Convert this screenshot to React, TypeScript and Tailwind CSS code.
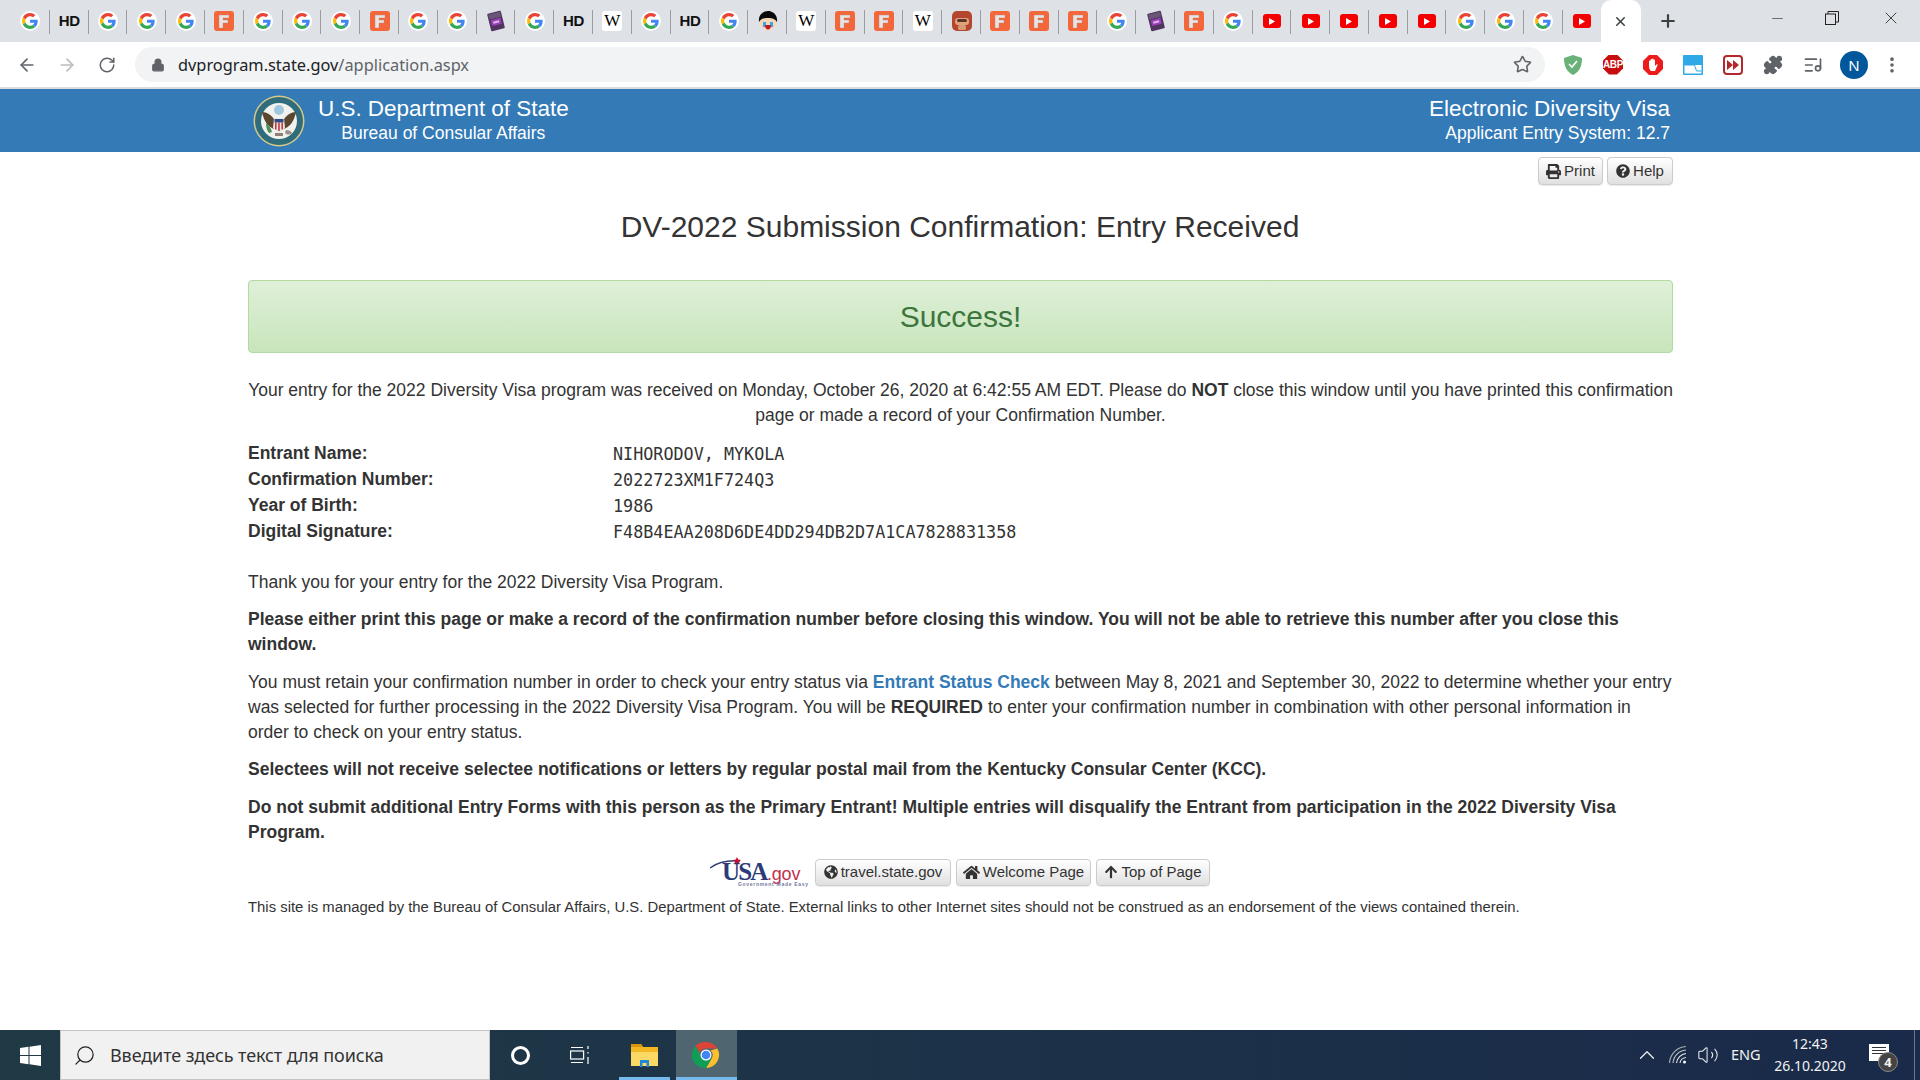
import React from 'react';
import { ArrowLeft, ArrowRight, RotateCw, Lock, Star, Puzzle, Plus, X, Minus, MoreVertical, ListMusic, Search, ChevronUp, Volume2 } from 'lucide-react';
import { FaPrint, FaQuestionCircle, FaGlobeAmericas, FaHome, FaArrowUp } from 'react-icons/fa';

const sans = { fontFamily: '"Liberation Sans", Arial, sans-serif' };

function G() {
  return (
    <div className="w-5 h-5 rounded-full bg-white flex items-center justify-center">
      <svg width="16" height="16" viewBox="0 0 48 48">
        <path fill="#EA4335" d="M24 9.5c3.5 0 6.7 1.2 9.2 3.6l6.9-6.9C35.9 2.4 30.5 0 24 0 14.6 0 6.5 5.4 2.6 13.2l8 6.2C12.5 13.7 17.800 9.5 24 9.5z" />
        <path fill="#4285F4" d="M47 24.500c0-1.600-.1-3.100-.4-4.500H24v9h12.900c-.6 3-2.200 5.500-4.700 7.200l7.700 6C44.400 38 47 31.800 47 24.500z" />
        <path fill="#FBBC05" d="M10.500 28.600c-.5-1.400-.8-3-.8-4.600s.3-3.200.8-4.600l-8-6.200C.9 16.500 0 20.100 0 24s.9 7.500 2.600 10.800l7.900-6.200z" />
        <path fill="#34A853" d="M24 48c6.500 0 11.900-2.100 15.900-5.800l-7.700-6c-2.200 1.400-4.900 2.300-8.200 2.300-6.200 0-11.500-4.200-13.400-9.900l-8 6.200C6.500 42.600 14.600 48 24 48z" />
      </svg>
    </div>
  );
}
function F() {
  return (
    <div className="w-5 h-5 rounded-[3px] bg-[#f4673a] flex items-center justify-center">
      <svg width="12" height="14" viewBox="0 0 12 14"><path d="M1 1h10v3H5v2h5v3H5v5H1z" fill="#e8e4e2" stroke="#a88" strokeWidth="0.4" /></svg>
    </div>
  );
}
function HD() {
  return <div className="text-[15px] font-bold text-[#111] leading-5 tracking-[-0.3px]" style={sans}>HD</div>;
}
function W() {
  return <div className="w-5 h-5 rounded-[3px] bg-white text-center text-[17px] leading-5 text-black" style={{ fontFamily: '"Liberation Serif", serif' }}>W</div>;
}
function P() {
  return (
    <svg width="20" height="22" viewBox="0 0 20 22">
      <g transform="rotate(-14 10 11)">
        <rect x="3" y="2" width="14" height="18" rx="1" fill="#50335f" />
        <rect x="4" y="3" width="12" height="5" fill="#6a5577" />
        <rect x="5" y="9" width="10" height="6" fill="#9a3fb8" />
        <rect x="7" y="11" width="6" height="2" fill="#d9b8e6" />
      </g>
    </svg>
  );
}
function Face() {
  return (
    <svg width="20" height="20" viewBox="0 0 20 20">
      <circle cx="10" cy="11" r="8.500" fill="#f5d7b8" />
      <path d="M1 11C0 3 6 0 10 0s10 3 9 11c-2-3-4-4-9-4s-7 1-9 4z" fill="#0a0a0a" />
      <path d="M5 11h3v5H5zM12 11h3v5h-3z" fill="#35a6e0" />
      <path d="M7 14h6c0 3-1.500 4.500-3 4.500S7 17 7 14z" fill="#c4162a" />
    </svg>
  );
}
function Monkey() {
  return (
    <svg width="20" height="20" viewBox="0 0 20 20">
      <rect width="20" height="20" rx="5" fill="#b4452f" />
      <rect x="3" y="7" width="14" height="7" rx="3" fill="#e3a37a" />
      <rect x="5" y="8" width="10" height="3" rx="1.500" fill="#5c3626" />
      <rect x="6" y="14" width="8" height="5" rx="1.500" fill="#d89a73" />
    </svg>
  );
}
function Y() {
  return (
    <div className="w-[18px] h-[14px] rounded-[3px] bg-[#f40000] flex items-center justify-center">
      <svg width="6" height="7" viewBox="0 0 6 7"><path d="M0 0l6 3.500L0 7z" fill="#fff" /></svg>
    </div>
  );
}

const tabs = 'G H G G G F G G G F G G P G H W G H G A W F F W M F F F G P F G Y Y Y Y Y G G G Y'.split(' ');
const tabIcon: Record<string, React.ReactNode> = { G: <G />, H: <HD />, F: <F />, W: <W />, P: <P />, A: <Face />, M: <Monkey />, Y: <Y /> };

function TabBar() {
  return (
    <div className="h-[42px] bg-[#dee1e6] flex items-start pl-[11px] relative">
      {tabs.map((t, i) => (
        <div key={i} className="w-[38.8px] h-[42px] flex items-center justify-center relative shrink-0">
          {tabIcon[t]}
          {i < tabs.length - 1 && <div className="absolute right-0 top-[10px] h-[24px] w-px bg-[#9a9da1]" />}
        </div>
      ))}
      <div className="w-[40px] h-[42px] bg-white rounded-t-[10px] flex items-center justify-center shrink-0 -ml-[1px]">
        <X size={15} strokeWidth={2.4} className="text-[#3c4043]" />
      </div>
      <div className="ml-[17px] h-[42px] flex items-center"><Plus size={20} strokeWidth={2.6} className="text-[#3c4043]" /></div>
      <div className="ml-auto flex h-[36px] items-center pr-[19px] text-[#3c4043]">
        <Minus size={17} strokeWidth={1} className="mr-[39px]" />
        <svg width="14" height="14" viewBox="0 0 14 14" fill="none" stroke="#222" className="mr-[42px]"><rect x="0.500" y="3" width="10" height="10.500" /><path d="M3 3V.500h10.500V11H10.500" /></svg>
        <X size={20} strokeWidth={1} className="text-[#222]" />
      </div>
    </div>
  );
}

function Toolbar() {
  return (
    <div className="h-[47px] bg-white border-b-2 border-[#dddddd] flex items-start">
      <div className="w-[135px] h-[45px] flex items-center pl-[17px] gap-[20px]">
        <ArrowLeft size={20} className="text-[#5f6368]" />
        <ArrowRight size={20} className="text-[#babcbe]" />
        <RotateCw size={18} className="text-[#5f6368] ml-[1px]" />
      </div>
      <div className="w-[1410px] h-[35px] mt-[5px] rounded-full bg-[#f1f3f4] flex items-center pl-[16px] pr-[13px]">
        <Lock size={14} fill="#5f6368" strokeWidth={2} className="text-[#5f6368]" />
        <div className="ml-[13px] text-[16.350px] leading-none text-[#5f6368] pt-[1px]" style={{ fontFamily: '"Noto Sans", sans-serif' }}>
          <span className="text-[#202124]">dvprogram.state.gov</span>/application.aspx
        </div>
        <Star size={19} className="ml-auto text-[#5f6368]" />
      </div>
      <div className="flex items-center h-[45px] ml-[18px] gap-[20px]">
        <svg width="20" height="22" viewBox="0 0 20 22"><path d="M10 1l9 3c0 9-3 14-9 17C4 18 1 13 1 4z" fill="#68b279" /><path d="M6 10l3 3 5-6" stroke="#fff" strokeWidth="1.600" fill="none" /></svg>
        <div className="w-[20px] h-[20px] bg-[#c70d0d] text-white text-[10px] font-bold text-center leading-5 tracking-[-0.4px] [clip-path:polygon(30%_0,70%_0,100%_30%,100%_70%,70%_100%,30%_100%,0_70%,0_30%)]" style={sans}>ABP</div>
        <svg width="20" height="20" viewBox="0 0 20 20"><path d="M6 0h8l6 6v8l-6 6H6l-6-6V6z" fill="#ec1c1c" /><path d="M6 10V6a.8.8 0 0 1 1.500 0v3V4.500a.8.8 0 0 1 1.500 0V9V4a.8.8 0 0 1 1.500 0v5V5a.8.8 0 0 1 1.500 0v6l1.500-1.500c.7-.5 1.400.1 1 .8L12 16H8c-1.500-1-2-3-2-6z" fill="#fff" /></svg>
        <svg width="20" height="20" viewBox="0 0 20 20"><rect width="20" height="20" rx="1" fill="#2fa8e8" /><rect x="1.500" y="10" width="17" height="8.500" fill="#fff" /><path d="M1.500 10h10l2 6h5" fill="none" stroke="#2fa8e8" strokeWidth="1" /></svg>
        <svg width="20" height="20" viewBox="0 0 20 20"><rect x="1" y="1" width="18" height="18" rx="3" fill="#fff" stroke="#b3282d" strokeWidth="2" /><path d="M4 5l6 5-6 5zM10 5l6 5-6 5z" fill="#b3282d" /></svg>
        <Puzzle size={20} fill="#5f6368" className="text-[#5f6368]" />
        <ListMusic size={20} className="text-[#5f6368]" />
        <div className="w-7 h-7 rounded-full bg-[#01579b] text-white text-[15px] text-center leading-7 -ml-[3px] -mr-[6px]" style={{ fontFamily: '"Noto Sans", sans-serif' }}>N</div>
        <MoreVertical size={20} strokeWidth={2.4} className="text-[#5f6368]" />
      </div>
    </div>
  );
}

function Seal() {
  return (
    <svg width="52" height="52" viewBox="0 0 52 52">
      <circle cx="26" cy="26" r="25.500" fill="#d7c98a" />
      <circle cx="26" cy="26" r="24" fill="#2f6d7d" />
      <circle cx="26" cy="26" r="18" fill="#f1f2ee" />
      <circle cx="26" cy="15" r="5" fill="#9fc8de" />
      <path d="M9 17c5 0 9 3 12 7l1 10c-6-1-11-7-13-17zM43 17c-5 0-9 3-12 7l-1 10c6-1 11-7 13-17z" fill="#5b4630" />
      <path d="M21 23h10l1 10-6 5-6-5z" fill="#e8e8e8" />
      <path d="M21.500 24h9v3.500h-9z" fill="#2b4a86" />
      <path d="M22 27.500h1.600v7H22zM25.200 27.500h1.600v8.500h-1.600zM28.400 27.500H30v7h-1.600z" fill="#c43a3a" />
      <path d="M13 28c3 2 5 5 6 9l-3 1c-2-2-3-6-3-10z" fill="#4e8f57" />
      <path d="M33 35c3 0 5 1 6 3-2 2-5 2-7 0z" fill="#9a9088" />
      <path d="M22 38h8v3h-8z" fill="#8d8078" />
    </svg>
  );
}

function Header() {
  return (
    <div className="h-[63px] bg-[#337ab7] text-white">
      <div className="w-[1425px] ml-[248px] h-full flex items-center justify-between pl-[5px] pr-[3px]" style={sans}>
        <div className="flex items-center">
          <Seal />
          <div className="ml-[13px] text-center">
            <div className="text-[22.500px] leading-[26px] tracking-[-0.03px]">U.S. Department of State</div>
            <div className="text-[17.500px] leading-[22px] mb-[1px]">Bureau of Consular Affairs</div>
          </div>
        </div>
        <div className="text-right">
          <div className="text-[22.500px] leading-[26px]">Electronic Diversity Visa</div>
          <div className="text-[17.500px] leading-[22px] mb-[1px]">Applicant Entry System: 12.7</div>
        </div>
      </div>
    </div>
  );
}

function Btn({ icon, children, className = '' }: { icon: React.ReactNode; children: React.ReactNode; className?: string }) {
  return (
    <div className={`h-[27px] flex items-center justify-center gap-[3px] rounded-[4px] border border-[#cccccc] bg-gradient-to-b from-white to-[#e0e0e0] text-[15px] leading-none text-[#333] shadow-[0_1px_1px_rgba(0,0,0,0.08)] ${className}`}>
      {icon}
      <span className="-mt-[1px]">{children}</span>
    </div>
  );
}

function Row({ label, value }: { label: string; value: string }) {
  return (
    <div className="flex h-[26px]">
      <div className="w-[365px] font-bold text-[17.500px] leading-[24px]">{label}</div>
      <div className="text-[16.750px] leading-[27px] text-[#333]" style={{ fontFamily: '"DejaVu Sans Mono", monospace' }}>{value}</div>
    </div>
  );
}

function UsaLogo() {
  return (
    <div className="relative w-[100px] h-[30px] shrink-0">
      <svg className="absolute left-0 top-0" width="36" height="14" viewBox="0 0 36 14">
        <path d="M0 11C8 5 18 3 30 4" fill="none" stroke="#2d3a78" strokeWidth="1.300" />
        <path d="M27 0l1.200 2.600 2.800.3-2 1.900.6 2.800-2.600-1.400-2.500 1.400.5-2.800-2-1.900 2.800-.3z" fill="#c8102e" />
      </svg>
      <div className="absolute left-[12px] top-[1px] text-[25px] leading-[28px] tracking-[-1.800px] font-bold text-[#2d3a78]" style={{ fontFamily: '"Liberation Serif", serif' }}>USA</div>
      <div className="absolute left-[57px] top-[7px] text-[18px] leading-[20px] tracking-[-0.2px] text-[#c4304c]" style={sans}>.gov</div>
      <div className="absolute left-[28px] top-[24px] text-[5px] leading-[6px] tracking-[0.7px] whitespace-nowrap text-[#75789f] font-bold" style={sans}>Government Made Easy</div>
    </div>
  );
}

function Main() {
  return (
    <div className="w-[1425px] ml-[248px] text-[#333] text-[17.500px] leading-[25px]" style={sans}>
      <div className="flex justify-end gap-[4px] pt-[5px]">
        <Btn icon={<FaPrint size={15} />} className="w-[65px] h-[28px]">Print</Btn>
        <Btn icon={<FaQuestionCircle size={14} />} className="w-[66px] h-[28px]">Help</Btn>
      </div>
      <h1 className="text-[30px] leading-[34px] text-center mt-[25px] -ml-[1px]">DV-2022 Submission Confirmation: Entry Received</h1>
      <div className="mt-[36px] h-[73px] rounded-[4px] border border-[#b2dba1] bg-gradient-to-b from-[#dff0d8] to-[#c8e5bc] text-[#3c763d] text-[30px] flex items-center justify-center">Success!</div>
      <p className="mt-[25px] text-center -mx-[6px]">
        Your entry for the 2022 Diversity Visa program was received on Monday, October 26, 2020 at 6:42:55 AM EDT. Please do <b>NOT</b> close this window until you have printed this confirmation page or made a record of your Confirmation Number.
      </p>
      <div className="mt-[13px]">
        <Row label="Entrant Name:" value="NIHORODOV, MYKOLA" />
        <Row label="Confirmation Number:" value="2022723XM1F724Q3" />
        <Row label="Year of Birth:" value="1986" />
        <Row label="Digital Signature:" value="F48B4EAA208D6DE4DD294DB2D7A1CA7828831358" />
      </div>
      <p className="mt-[25px]">Thank you for your entry for the 2022 Diversity Visa Program.</p>
      <p className="mt-[12px] font-bold">Please either print this page or make a record of the confirmation number before closing this window. You will not be able to retrieve this number after you close this window.</p>
      <p className="mt-[13px]">
        You must retain your confirmation number in order to check your entry status via <b className="text-[#337ab7]">Entrant Status Check</b> between May 8, 2021 and September 30, 2022 to determine whether your entry was selected for further processing in the 2022 Diversity Visa Program. You will be <b>REQUIRED</b> to enter your confirmation number in combination with other personal information in order to check on your entry status.
      </p>
      <p className="mt-[12px] font-bold">Selectees will not receive selectee notifications or letters by regular postal mail from the Kentucky Consular Center (KCC).</p>
      <p className="mt-[13px] font-bold">Do not submit additional Entry Forms with this person as the Primary Entrant! Multiple entries will disqualify the Entrant from participation in the 2022 Diversity Visa Program.</p>
      <div className="mt-[12px] w-[1424px] flex justify-center items-center gap-[5px]">
        <UsaLogo />
        <Btn icon={<FaGlobeAmericas size={14} />} className="w-[136px]">travel.state.gov</Btn>
        <Btn icon={<FaHome size={17} />} className="w-[135px]">Welcome Page</Btn>
        <Btn icon={<FaArrowUp size={14} />} className="w-[114px]">Top of Page</Btn>
      </div>
      <p className="mt-[10px] text-[14.875px] leading-[20px]">This site is managed by the Bureau of Consular Affairs, U.S. Department of State. External links to other Internet sites should not be construed as an endorsement of the views contained therein.</p>
    </div>
  );
}

function Taskbar() {
  return (
    <div className="h-[50px] bg-gradient-to-r from-[#1f3a45] to-[#1a2a4a] flex items-stretch text-white">
      <div className="w-[60px] flex items-center justify-center">
        <svg width="21" height="21" viewBox="0 0 21 21" fill="#fff"><path d="M0 3l8.500-1.200V10H0zM9.500 1.700L21 0v10H9.500zM0 11h8.500v8.200L0 18zM9.500 11H21v10L9.500 19.300z" /></svg>
      </div>
      <div className="w-[430px] bg-[#f1f1f1] border border-[#c4c4c4] flex items-center pl-[12px] text-[#333] text-[18px]" style={{ fontFamily: '"Noto Sans", sans-serif' }}>
        <Search size={23} strokeWidth={1.300} className="text-[#222] -scale-x-100" />
        <span className="ml-[14px] tracking-[-0.1px]">Введите здесь текст для поиска</span>
      </div>
      <div className="w-[60px] flex items-center justify-center">
        <div className="w-[19px] h-[19px] rounded-full border-[3px] border-white" />
      </div>
      <div className="w-[60px] flex items-center justify-center">
        <svg width="20" height="20" viewBox="0 0 20 20" fill="none" stroke="#fff" strokeWidth="1.200"><rect x="0.600" y="6" width="13" height="8" /><path d="M1 2.500h12M1 17.500h12M18 1v3M18 7v1.500M18 12v7" /></svg>
      </div>
      <div className="w-[51px] ml-[9px] flex items-center justify-center relative">
        <svg width="27" height="26" viewBox="0 0 27 26"><path d="M0 2h10l2 3h15v19H0z" fill="#f3b821" /><path d="M0 2h10l2 3H0z" fill="#d9930f" /><path d="M0 10h27v14H0z" fill="#fcd864" /><path d="M9 25v-7h9v7h-2.500v-4h-4v4z" fill="#1e88d8" /></svg>
        <div className="absolute bottom-0 inset-x-0 h-[3px] bg-[#76b9ed]" />
      </div>
      <div className="w-[61px] ml-[6px] bg-[#4f6570] flex items-center justify-center relative">
        <svg width="28" height="28" viewBox="0 0 28 28" className="-ml-[2px]">
          <path d="M14 1a13 13 0 0 1 11.300 6.500H14a6.500 6.500 0 0 0-6.200 4.500L3.500 5A13 13 0 0 1 14 1z" fill="#db4437" />
          <path d="M25.300 7.500A13 13 0 0 1 14 27l5.700-9.800A6.500 6.500 0 0 0 18.600 9.400z" fill="#fbc02d" />
          <path d="M3.500 5l5.600 9.800A6.500 6.500 0 0 0 19.700 17.200L14 27A13 13 0 0 1 3.500 5z" fill="#0f9d58" />
          <circle cx="14" cy="14" r="5.500" fill="#fff" /><circle cx="14" cy="14" r="4.300" fill="#4285f4" />
        </svg>
        <div className="absolute bottom-0 inset-x-0 h-[3px] bg-[#76b9ed]" />
      </div>
      <div className="ml-auto flex items-center text-[#f2f2f2]" style={{ fontFamily: '"Noto Sans", sans-serif' }}>
        <ChevronUp size={26} strokeWidth={1.100} />
        <svg width="20" height="20" viewBox="0 0 20 20" fill="none" stroke="#e8e8e8" strokeWidth="1.100" className="ml-[8px]">
          <path d="M1.500 18C2 9 9 2 18 1.500" opacity="0.7" /><path d="M5 18C5.500 11 11 5.500 18 5" opacity="0.8" /><path d="M8.500 18C9 13 13 9 18 8.500" /><path d="M12 18c.3-2.500 2.500-5 6-5.500" />
          <circle cx="16.500" cy="17" r="1.500" fill="#fff" stroke="none" />
        </svg>
        <Volume2 size={22} strokeWidth={1.100} className="ml-[9px]" />
        <div className="ml-[12px] text-[14.500px] w-[40px]">ENG</div>
        <div className="-ml-[1px] w-[80px] text-center text-[14px] leading-[22px]">
          <div>12:43</div><div>26.10.2020</div>
        </div>
        <div className="ml-[19px] mr-[17px] relative w-[28px] h-[32px]">
          <div className="absolute left-0 top-[5px] w-[20px] h-[17px] bg-white flex flex-col gap-[2px] px-[3px] pt-[3px]">
            <div className="h-px bg-[#333]" /><div className="h-px bg-[#333]" /><div className="h-px bg-[#333]" />
          </div>
          <div className="absolute left-[9px] top-[13px] w-[20px] h-[20px] rounded-full bg-[#444] border border-[#888] text-center text-[13px] leading-[18px] font-bold">4</div>
        </div>
        <div className="w-px self-stretch bg-[#6c7684] mr-[5px]" />
      </div>
    </div>
  );
}

export default function App() {
  return (
    <div className="w-[1920px] h-[1080px] flex flex-col overflow-hidden bg-white">
      <TabBar />
      <Toolbar />
      <Header />
      <div className="flex-1"><Main /></div>
      <Taskbar />
    </div>
  );
}
